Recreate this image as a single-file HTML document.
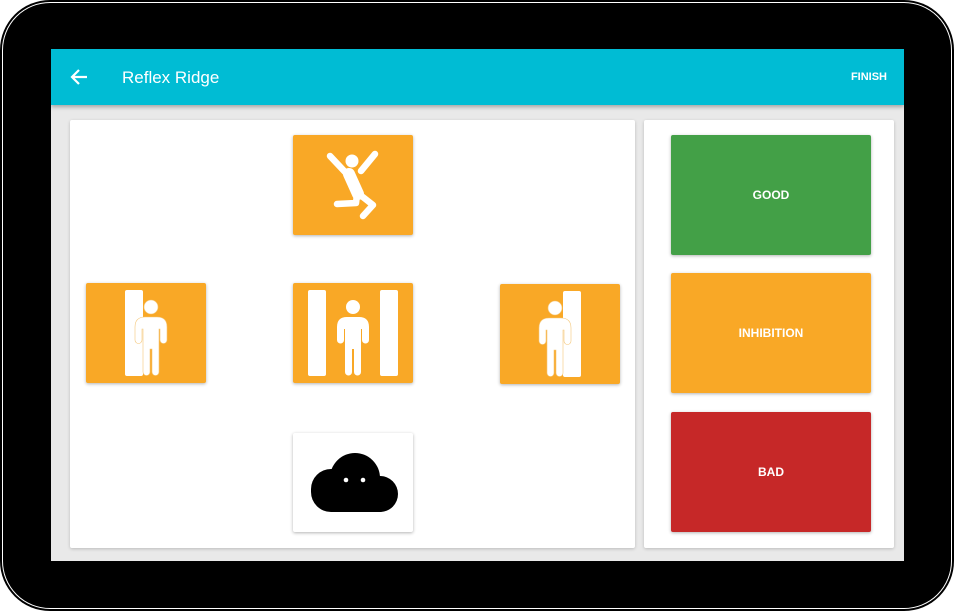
<!DOCTYPE html>
<html><head><style>
*{margin:0;padding:0;box-sizing:border-box}
body{width:954px;height:612px;background:#fff;position:relative;overflow:hidden;font-family:"Liberation Sans",Arial,sans-serif}
.frame{position:absolute;left:0;top:0;width:954px;height:611px;background:#000;border-radius:50px}
.inner{position:absolute;left:2px;top:2px;width:950px;height:607px;border:1.5px solid #fff;border-radius:48px}
.frame2{position:absolute;left:4px;top:4px;width:946px;height:603px;background:#000;border-radius:46px}
.screen{position:absolute;left:51px;top:49px;width:853px;height:512px;background:#e9e9e9;overflow:hidden}
.bar{position:absolute;left:0;top:0;width:853px;height:56px;background:#00bcd4;box-shadow:0 2px 4px rgba(0,0,0,.3);color:#fff}
.title{position:absolute;left:71px;top:19px;font-size:17px}
.finish{position:absolute;right:17px;top:22px;font-size:11px;font-weight:bold}
.card{position:absolute;background:#fff;border-radius:2px;box-shadow:0 1px 3px rgba(0,0,0,.2)}
.tile{position:absolute;width:120px;height:100px;background:#f9a826;border-radius:2px;box-shadow:0 1px 3px rgba(0,0,0,.3)}
.btn{position:absolute;left:27px;width:200px;height:120px;border-radius:2px;color:#fff;font-size:12px;font-weight:bold;display:flex;align-items:center;justify-content:center;box-shadow:0 1px 3px rgba(0,0,0,.3)}
svg{position:absolute;left:0;top:0}
</style></head><body>
<div class="frame"></div><div class="inner"></div><div class="frame2"></div>
<div class="screen">
 <div class="bar">
  <svg width="60" height="56"><path d="M36 28H21M28 21l-7 7 7 7" stroke="#fff" stroke-width="2.2" fill="none"/></svg>
  <div class="title">Reflex Ridge</div>
  <div class="finish">FINISH</div>
 </div>
 <div class="card" style="left:19px;top:71px;width:565px;height:428px">
  <div class="tile" style="left:223px;top:15px">
   <svg width="120" height="100"><circle cx="59" cy="26" r="6.5" fill="#fff"/>
   <path d="M37 21l16 17 M82 19l-14 17 M64 59l-1 9-19 1 M66 59l14 11-10 11" stroke="#fff" stroke-width="6.5" stroke-linecap="round" stroke-linejoin="round" fill="none"/>
   <path d="M56 39l9 20" stroke="#fff" stroke-width="12" stroke-linecap="round"/></svg>
  </div>
  <div class="tile" style="left:16px;top:163px">
   <svg width="120" height="100"><rect x="39" y="7" width="18" height="86" rx="2" fill="#fff"/>
   <g fill="#fff" stroke="#f4c77a" stroke-width=".6"><circle cx="65" cy="24" r="7"/><path d="M49 57V44q0-10 10-10h12q10 0 10 10v13a3.5 3.5 0 0 1-7 0V46h-1v43a3.5 3.5 0 0 1-7 0V66h-2v23a3.5 3.5 0 0 1-7 0V46h-1v11a3.5 3.5 0 0 1-7 0z"/></g></svg>
  </div>
  <div class="tile" style="left:223px;top:163px">
   <svg width="120" height="100"><rect x="15" y="7" width="18" height="86" rx="2" fill="#fff"/><rect x="87" y="7" width="18" height="86" rx="2" fill="#fff"/>
   <g fill="#fff"><circle cx="60" cy="24" r="7"/><path d="M44 57V44q0-10 10-10h12q10 0 10 10v13a3.5 3.5 0 0 1-7 0V46h-1v43a3.5 3.5 0 0 1-7 0V66h-2v23a3.5 3.5 0 0 1-7 0V46h-1v11a3.5 3.5 0 0 1-7 0z"/></g></svg>
  </div>
  <div class="tile" style="left:430px;top:164px">
   <svg width="120" height="100"><rect x="63" y="7" width="18" height="86" rx="2" fill="#fff"/>
   <g fill="#fff" stroke="#f4c77a" stroke-width=".6"><circle cx="55" cy="24" r="7"/><path d="M39 57V44q0-10 10-10h12q10 0 10 10v13a3.5 3.5 0 0 1-7 0V46h-1v43a3.5 3.5 0 0 1-7 0V66h-2v23a3.5 3.5 0 0 1-7 0V46h-1v11a3.5 3.5 0 0 1-7 0z"/></g></svg>
  </div>
  <div class="tile" style="left:223px;top:313px;background:#fff;height:99px">
   <svg width="120" height="100"><defs><clipPath id="c"><rect x="0" y="0" width="120" height="79"/></clipPath></defs>
   <g clip-path="url(#c)" fill="#000"><circle cx="62" cy="45" r="25"/><rect x="18" y="36" width="44" height="43" rx="20"/><circle cx="87" cy="61" r="18"/><rect x="38" y="50" width="50" height="29"/></g>
   <circle cx="53" cy="47" r="2.3" fill="#fff"/><circle cx="70" cy="47" r="2.3" fill="#fff"/></svg>
  </div>
 </div>
 <div class="card" style="left:593px;top:71px;width:250px;height:428px">
  <div class="btn" style="top:15px;background:#43a047">GOOD</div>
  <div class="btn" style="top:153px;background:#f9a826">INHIBITION</div>
  <div class="btn" style="top:292px;background:#c62828">BAD</div>
 </div>
</div>
</body></html>
